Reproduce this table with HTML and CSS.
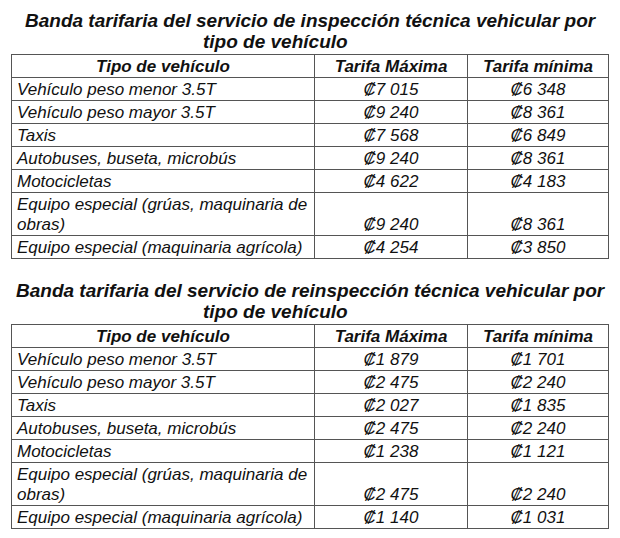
FILE: index.html
```html
<!DOCTYPE html>
<html lang="es">
<head>
<meta charset="utf-8">
<title>Banda tarifaria</title>
<link rel="stylesheet" href="styles.css">
</head>
<body>
<section class="block">
  <h2 class="title"><span class="l1 first">Banda tarifaria del servicio de inspección técnica vehicular por</span><span class="l2">tipo de vehículo</span></h2>
  <table class="tarifas">
    <thead>
      <tr><th class="c1">Tipo de vehículo</th><th class="c2">Tarifa Máxima</th><th class="c3">Tarifa mínima</th></tr>
    </thead>
    <tbody>
      <tr><td>Vehículo peso menor 3.5T</td><td class="v">₡7 015</td><td class="v">₡6 348</td></tr>
      <tr><td>Vehículo peso mayor 3.5T</td><td class="v">₡9 240</td><td class="v">₡8 361</td></tr>
      <tr><td>Taxis</td><td class="v">₡7 568</td><td class="v">₡6 849</td></tr>
      <tr><td>Autobuses, buseta, microbús</td><td class="v">₡9 240</td><td class="v">₡8 361</td></tr>
      <tr><td>Motocicletas</td><td class="v">₡4 622</td><td class="v">₡4 183</td></tr>
      <tr><td>Equipo especial (grúas, maquinaria de obras)</td><td class="v">₡9 240</td><td class="v">₡8 361</td></tr>
      <tr><td>Equipo especial (maquinaria agrícola)</td><td class="v">₡4 254</td><td class="v">₡3 850</td></tr>
    </tbody>
  </table>
</section>
<section class="block second">
  <h2 class="title"><span class="l1">Banda tarifaria del servicio de reinspección técnica vehicular por</span><span class="l2">tipo de vehículo</span></h2>
  <table class="tarifas">
    <thead>
      <tr><th class="c1">Tipo de vehículo</th><th class="c2">Tarifa Máxima</th><th class="c3">Tarifa mínima</th></tr>
    </thead>
    <tbody>
      <tr><td>Vehículo peso menor 3.5T</td><td class="v">₡1 879</td><td class="v">₡1 701</td></tr>
      <tr><td>Vehículo peso mayor 3.5T</td><td class="v">₡2 475</td><td class="v">₡2 240</td></tr>
      <tr><td>Taxis</td><td class="v">₡2 027</td><td class="v">₡1 835</td></tr>
      <tr><td>Autobuses, buseta, microbús</td><td class="v">₡2 475</td><td class="v">₡2 240</td></tr>
      <tr><td>Motocicletas</td><td class="v">₡1 238</td><td class="v">₡1 121</td></tr>
      <tr><td>Equipo especial (grúas, maquinaria de obras)</td><td class="v">₡2 475</td><td class="v">₡2 240</td></tr>
      <tr><td>Equipo especial (maquinaria agrícola)</td><td class="v">₡1 140</td><td class="v">₡1 031</td></tr>
    </tbody>
  </table>
</section>
</body>
</html>
```
FILE: styles.css
```css
html, body {
  margin: 0;
  background: #ffffff;
}
body {
  padding: 10px 0 0 11px;
  font-family: "Liberation Sans", Arial, "DejaVu Sans", sans-serif;
  color: #111111;
}
.block.second {
  margin-top: 21px;
}
.title {
  margin: 0 0 2px;
  font-size: 19px;
  font-weight: bold;
  font-style: italic;
  line-height: 21px;
}
.title .l1 {
  display: block;
  padding-left: 5px;
}
.title .l1.first {
  padding-left: 14px;
}
.title .l2 {
  display: block;
  padding-left: 192px;
}
.tarifas {
  border-collapse: collapse;
  table-layout: fixed;
  font-size: 17px;
  font-style: italic;
  line-height: 20px;
}
.tarifas th,
.tarifas td {
  border: 1px solid #555555;
  padding: 2px 5px 0;
  vertical-align: bottom;
  text-align: left;
}
.tarifas th {
  font-weight: bold;
  text-align: center;
}
.tarifas .c1 { width: 292px; }
.tarifas .c2 { width: 142px; }
.tarifas .c3 { width: 130px; }
.tarifas td.v {
  text-align: center;
}
```
